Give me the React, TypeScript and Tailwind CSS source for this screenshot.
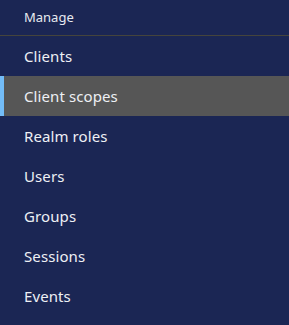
import React from "react";

const items = ["Clients", "Client scopes", "Realm roles", "Users", "Groups", "Sessions", "Events"];

const App: React.FC = () => {
    const [active, setActive] = React.useState<string>("Client scopes");

    return (
        <nav className="w-[289px] h-[325px] bg-[#1b2654] overflow-hidden font-['Noto_Sans',sans-serif]">
            <div className="h-9 flex items-center pl-6 text-[13px] text-[#e8eaf0] border-b border-[#45443c]">
                Manage
            </div>
            <ul>
                {items.map((item) => (
                    <li key={item}>
                        <button
                            className={
                                item === active
                                    ? "w-full h-10 flex items-center pl-5 text-left text-[15px] tracking-[0.1px] text-[#eef0f4] bg-[#565656] border-l-4 border-[#73bcf7]"
                                    : "w-full h-10 flex items-center pl-6 text-left text-[15px] tracking-[0.1px] text-[#eef0f4]"
                            }
                            onClick={() => setActive(item)}
                        >
                            {item}
                        </button>
                    </li>
                ))}
            </ul>
        </nav>
    );
};

export default App;
